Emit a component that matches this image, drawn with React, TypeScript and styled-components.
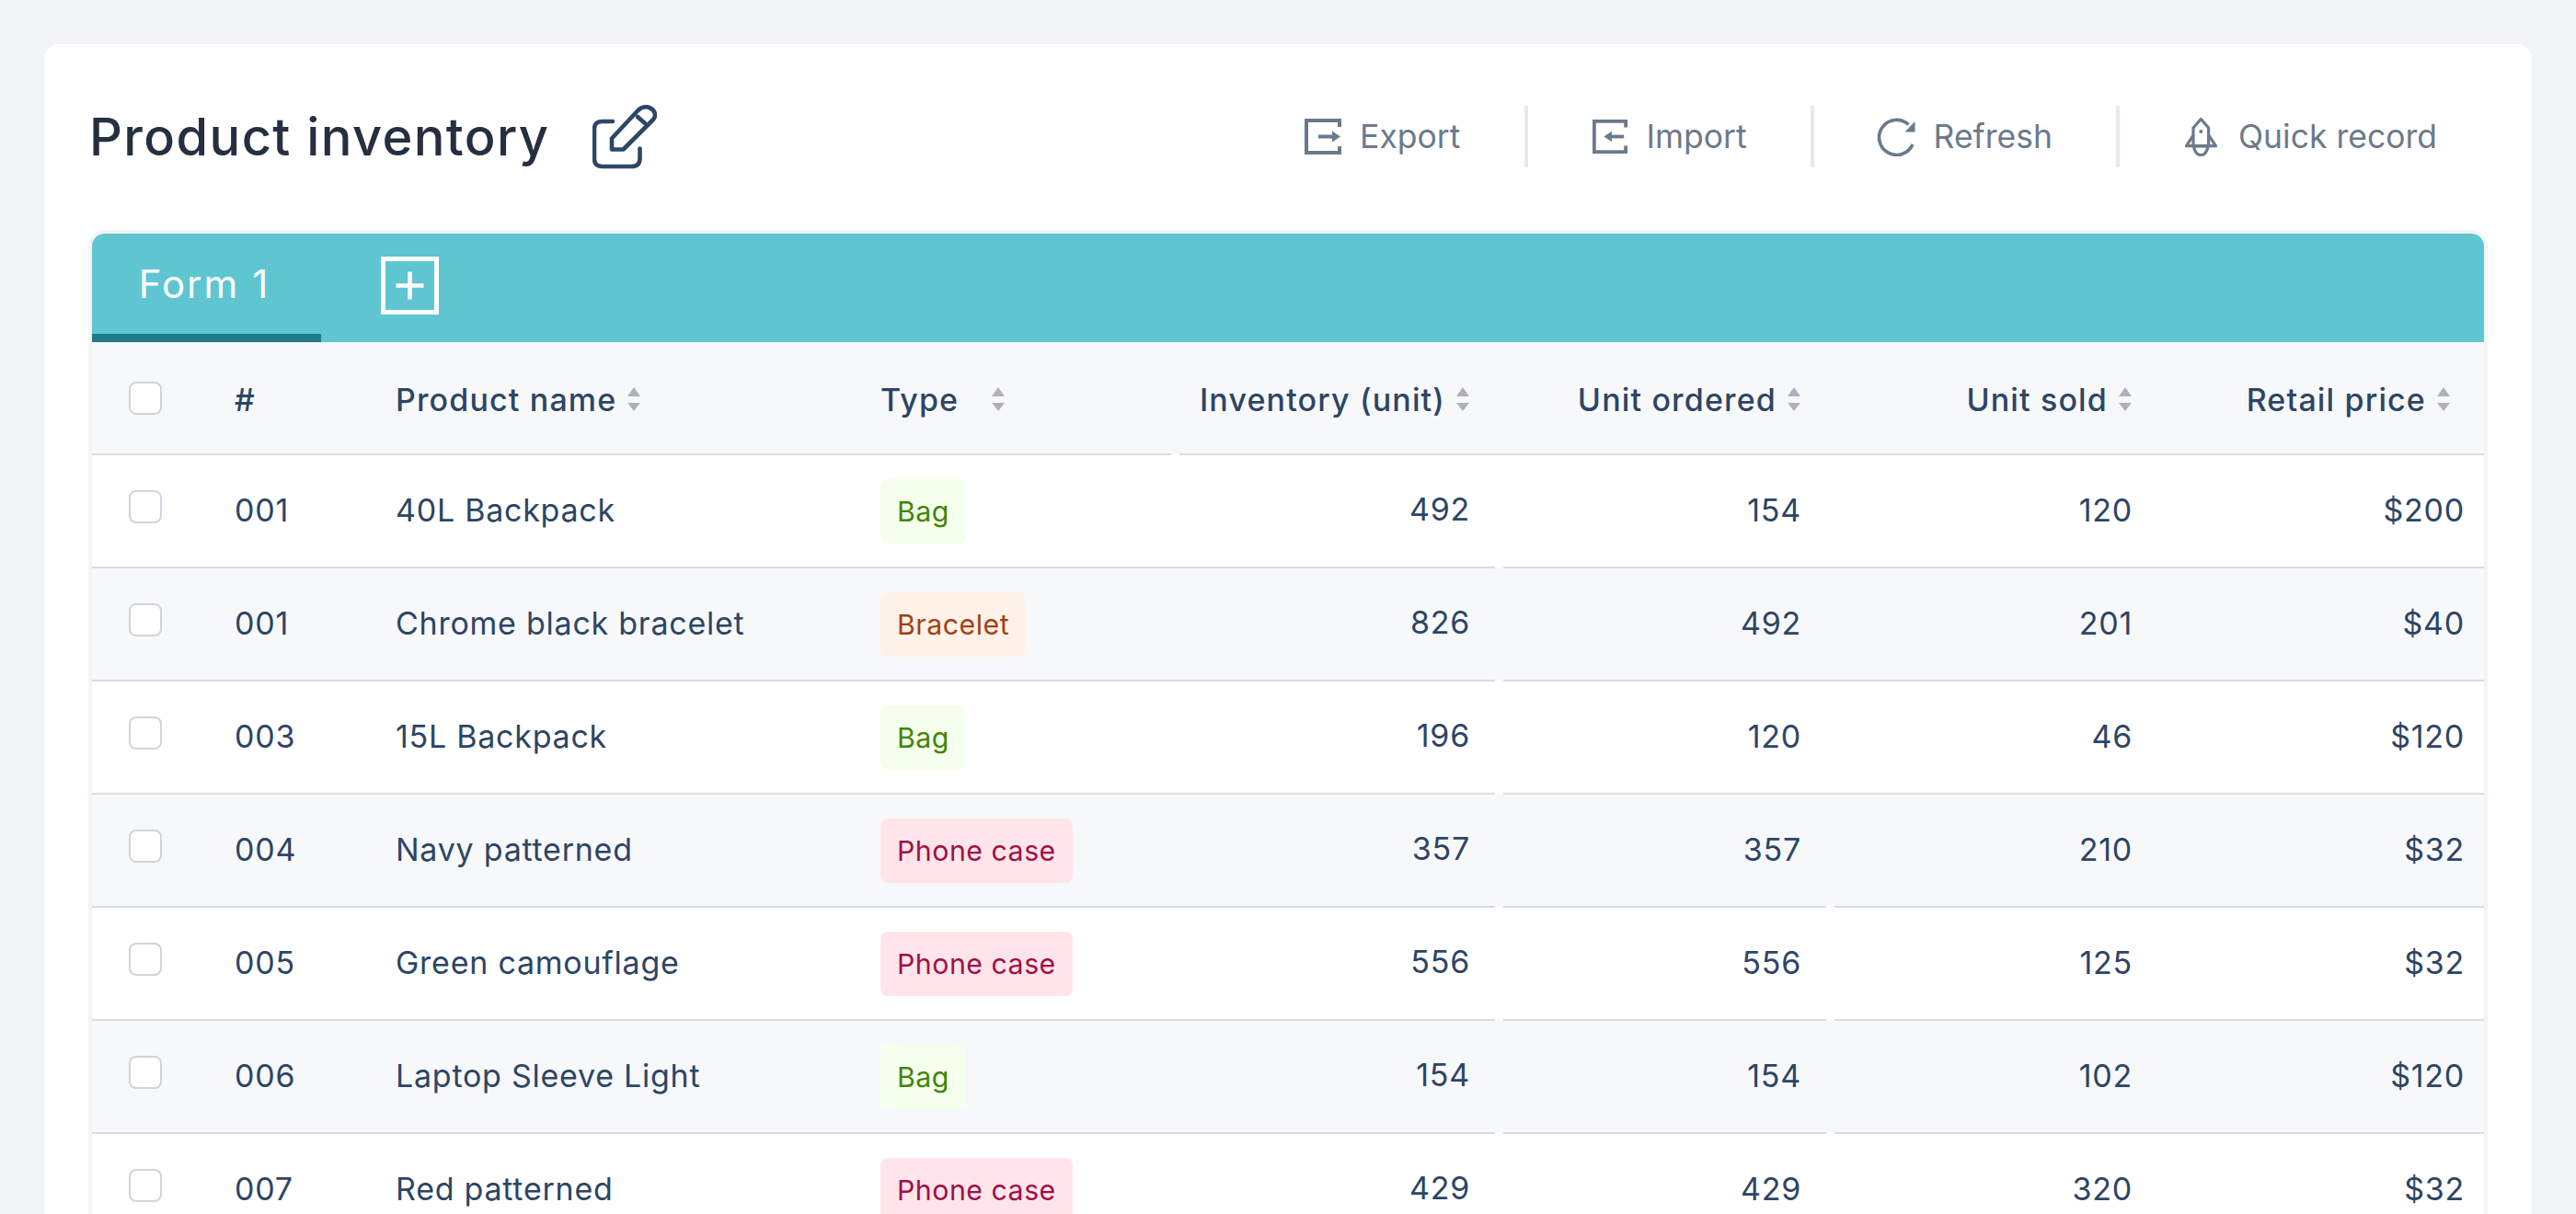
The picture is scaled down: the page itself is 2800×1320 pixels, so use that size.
import React from "react";
import styled, { createGlobalStyle } from "styled-components";

const GlobalStyle = createGlobalStyle`
  html, body {
    margin: 0;
    height: 100%;
    overflow: hidden;
    background: #f2f3f5;
  }
  * {
    box-sizing: border-box;
  }
`;

const COLUMNS = "125px 175px 525px 352px 352px 359px 361px 351px";

const Page = styled.div`
  height: 100vh;
  padding: 48px 48px 0;
  overflow: hidden;
  font-family: Inter, "Liberation Sans", sans-serif;
  color: #2d4564;
`;

const Card = styled.main`
  background: #fff;
  border-radius: 16px;
  padding: 48px 48px 0;
  min-height: 1400px;
`;

const Header = styled.header`
  display: flex;
  align-items: center;
  justify-content: space-between;
  height: 105px;
  margin-bottom: 49px;
`;

const TitleGroup = styled.div`
  display: flex;
  align-items: center;
  gap: 47px;
  padding-left: 1px;
`;

const Title = styled.h1`
  margin: 0;
  font-size: 56px;
  font-weight: 500;
  letter-spacing: 1.4px;
  color: #252f3f;
`;

const Toolbar = styled.div`
  display: flex;
  align-items: center;
  padding-right: 55px;
`;

const ToolButton = styled.button<{ $left: number; $right: number; $gap?: number }>`
  display: flex;
  align-items: center;
  gap: ${(p) => p.$gap ?? 20}px;
  height: 67px;
  padding: 0 ${(p) => p.$right}px 0 ${(p) => p.$left}px;
  border: 0;
  border-right: 4px solid #e8e9ee;
  background: none;
  font: inherit;
  font-size: 35.5px;
  color: #6b7a8b;

  &:last-child {
    border-right: 0;
  }
`;

const Frame = styled.section`
  border: 4px solid #f3f4f6;
  border-bottom: 0;
  border-radius: 18px 18px 0 0;
  overflow: hidden;
  background: #f7f8fa;
`;

const TabBar = styled.div`
  display: flex;
  align-items: center;
  gap: 65px;
  height: 118px;
  background: #5fc5d1;
`;

const Tab = styled.div`
  display: flex;
  align-items: center;
  justify-content: center;
  align-self: stretch;
  width: 249px;
  padding-right: 5px;
  border-bottom: 9px solid #1f7a8a;
  font-size: 42px;
  letter-spacing: 2px;
  color: #fff;
`;

const AddTab = styled.svg`
  width: 63px;
  height: 63px;
  margin-bottom: 5px;
`;

const Row = styled.div<{ $striped?: boolean; $head?: boolean; $secondNotch?: boolean }>`
  position: relative;
  display: grid;
  grid-template-columns: ${COLUMNS};
  align-items: center;
  height: 123px;
  border-bottom: 2px solid #d9dce5;
  background: ${(p) => (p.$striped || p.$head ? "#f7f8fa" : "#fff")};
  font-size: 34px;
  letter-spacing: 0.75px;

  &::before,
  &::after {
    content: "";
    position: absolute;
    bottom: -2px;
    width: 9px;
    height: 2px;
    background: #fbfcfd;
  }

  &::before {
    left: ${(p) => (p.$head ? 1173 : 1525)}px;
  }

  &::after {
    left: 1885px;
    display: ${(p) => (p.$secondNotch ? "block" : "none")};
  }
`;

const Cell = styled.div<{ $right?: boolean; $pad?: number; $lift?: number }>`
  display: flex;
  align-items: center;
  justify-content: ${(p) => (p.$right ? "flex-end" : "flex-start")};
  gap: 12px;
  padding-left: ${(p) => (p.$right ? 0 : p.$pad ?? 0)}px;
  padding-right: ${(p) => (p.$right ? p.$pad ?? 0 : 0)}px;
  margin-bottom: ${(p) => p.$lift ?? 0}px;
  white-space: nowrap;
`;

const HeadCell = styled(Cell)`
  font-weight: 500;
  letter-spacing: 1.15px;
  margin-top: 3px;
`;

const Checkbox = styled.span`
  display: block;
  width: 36px;
  height: 36px;
  border: 2px solid #d0d4dd;
  border-radius: 8px;
  background: #fff;
`;

const TAG_COLORS = {
  Bag: { bg: "#f6ffed", fg: "#3f8600" },
  Bracelet: { bg: "#fff2e8", fg: "#a63f13" },
  "Phone case": { bg: "#ffe5e9", fg: "#9e1146" },
};

type TagName = keyof typeof TAG_COLORS;

const Tag = styled.span<{ $type: TagName }>`
  display: inline-flex;
  align-items: center;
  height: 70px;
  padding: 0 18px;
  border-radius: 8px;
  font-size: 30.3px;
  letter-spacing: 0.5px;
  background: ${(p) => TAG_COLORS[p.$type].bg};
  color: ${(p) => TAG_COLORS[p.$type].fg};
`;

const SortSvg = styled.svg<{ $wide?: boolean }>`
  width: 14px;
  height: 26px;
  flex: none;
  margin-left: ${(p) => (p.$wide ? 24 : 0)}px;
`;

const SortIcon = ({ wide }: { wide?: boolean }) => (
  <SortSvg viewBox="0 0 14 26" $wide={wide}>
    <path d="M7 0l7 10H0zM0 17h14l-7 9z" fill="#aeb1bd" />
  </SortSvg>
);

const EditIcon = () => (
  <svg width="70" height="70" viewBox="0 0 70 70" fill="none" stroke="#2d4766" strokeWidth="4.6" strokeLinecap="round" strokeLinejoin="round">
    <path d="M22 18H10.500Q2 18 2 26.500V58.500Q2 67 10.500 67H42.500Q51.500 67 51.500 58.500V47.500" />
    <path d="M21 36.500L49.500 6Q54.500 1 60.500 2.500Q68 5 68 11.500Q68 14 65.500 16.500L33.500 48.500H21Z" />
    <path d="M49 13L57.500 20.500" />
  </svg>
);

const ExportIcon = () => (
  <svg width="40" height="39" viewBox="0 0 40 39" fill="none" stroke="#6b7a8b" strokeWidth="4">
    <path d="M38 9V2H2V37H38V30" />
    <path d="M15 19.500H31" />
    <path d="M30 13.500L39 19.500L30 25.500Z" fill="#6b7a8b" stroke="none" />
  </svg>
);

const ImportIcon = () => (
  <svg width="38" height="39" viewBox="0 0 40 39" fill="none" stroke="#6b7a8b" strokeWidth="4">
    <path d="M38 9V2H2V37H38V30" />
    <path d="M21 19.500H36" />
    <path d="M22 13.500L13 19.500L22 25.500Z" fill="#6b7a8b" stroke="none" />
  </svg>
);

const RefreshIcon = () => (
  <svg width="42" height="42" viewBox="0 0 42 42" fill="none" stroke="#6b7a8b" strokeWidth="3.6">
    <path d="M39 29A19 19 0 1 1 34.500 7.500" />
    <path d="M41.500 4V15.500H30.500Z" fill="#6b7a8b" stroke="none" />
  </svg>
);

const RocketIcon = () => (
  <svg width="35" height="42" viewBox="0 0 35 42" fill="none" stroke="#6b7a8b" strokeWidth="3.2" strokeLinejoin="round">
    <path d="M17.300 1.500L25.600 11V31H9V11Z" />
    <path d="M9 19L1.500 30.700H33.500L25.600 19" />
    <path d="M9.500 32Q12 41 17.300 40.500Q22.500 41 25 32" />
    <circle cx="17.300" cy="15" r="2" fill="#6b7a8b" stroke="none" />
  </svg>
);

const ROWS: { id: string; name: string; type: TagName; stock: number; ordered: number; sold: number; price: string }[] = [
  { id: "001", name: "40L Backpack", type: "Bag", stock: 492, ordered: 154, sold: 120, price: "$200" },
  { id: "001", name: "Chrome black bracelet", type: "Bracelet", stock: 826, ordered: 492, sold: 201, price: "$40" },
  { id: "003", name: "15L Backpack", type: "Bag", stock: 196, ordered: 120, sold: 46, price: "$120" },
  { id: "004", name: "Navy patterned", type: "Phone case", stock: 357, ordered: 357, sold: 210, price: "$32" },
  { id: "005", name: "Green camouflage", type: "Phone case", stock: 556, ordered: 556, sold: 125, price: "$32" },
  { id: "006", name: "Laptop Sleeve Light", type: "Bag", stock: 154, ordered: 154, sold: 102, price: "$120" },
  { id: "007", name: "Red patterned", type: "Phone case", stock: 429, ordered: 429, sold: 320, price: "$32" },
];

const App = (): JSX.Element => {
  return (
    <Page>
      <GlobalStyle />
      <Card>
        <Header>
          <TitleGroup>
            <Title>Product inventory</Title>
            <EditIcon />
          </TitleGroup>
          <Toolbar>
            <ToolButton $left={70} $right={70}>
              <ExportIcon />
              Export
            </ToolButton>
            <ToolButton $left={70} $right={69}>
              <ImportIcon />
              Import
            </ToolButton>
            <ToolButton $left={68} $right={69}>
              <RefreshIcon />
              Refresh
            </ToolButton>
            <ToolButton $left={71} $right={0} $gap={23}>
              <RocketIcon />
              Quick record
            </ToolButton>
          </Toolbar>
        </Header>
        <Frame>
          <TabBar>
            <Tab>Form 1</Tab>
            <AddTab viewBox="0 0 63 63" fill="none" stroke="#fff">
              <rect x="2.500" y="2.500" width="58" height="58" strokeWidth="5" />
              <path d="M16.500 31.500H46.500M31.500 16.500V46.500" strokeWidth="4.600" />
            </AddTab>
          </TabBar>
          <Row $head>
            <Cell $pad={40}>
              <Checkbox />
            </Cell>
            <HeadCell $pad={30}>#</HeadCell>
            <HeadCell $pad={30}>
              Product name
              <SortIcon />
            </HeadCell>
            <HeadCell $pad={32}>
              Type
              <SortIcon wide />
            </HeadCell>
            <HeadCell $right $pad={32}>
              Inventory (unit)
              <SortIcon />
            </HeadCell>
            <HeadCell $right $pad={31}>
              Unit ordered
              <SortIcon />
            </HeadCell>
            <HeadCell $right $pad={32}>
              Unit sold
              <SortIcon />
            </HeadCell>
            <HeadCell $right $pad={37}>
              Retail price
              <SortIcon />
            </HeadCell>
          </Row>
          {ROWS.map((row, i) => (
            <Row key={row.name} $striped={i % 2 === 1} $secondNotch={i >= 3}>
              <Cell $pad={40} $lift={10}>
                <Checkbox />
              </Cell>
              <Cell $pad={30} $lift={3}>
                {row.id}
              </Cell>
              <Cell $pad={30} $lift={3}>
                {row.name}
              </Cell>
              <Cell $pad={32}>
                <Tag $type={row.type}>{row.type}</Tag>
              </Cell>
              <Cell $right $pad={31} $lift={5}>
                {row.stock}
              </Cell>
              <Cell $right $pad={30} $lift={3}>
                {row.ordered}
              </Cell>
              <Cell $right $pad={31} $lift={3}>
                {row.sold}
              </Cell>
              <Cell $right $pad={21} $lift={3}>
                {row.price}
              </Cell>
            </Row>
          ))}
        </Frame>
      </Card>
    </Page>
  );
};

export default App;
